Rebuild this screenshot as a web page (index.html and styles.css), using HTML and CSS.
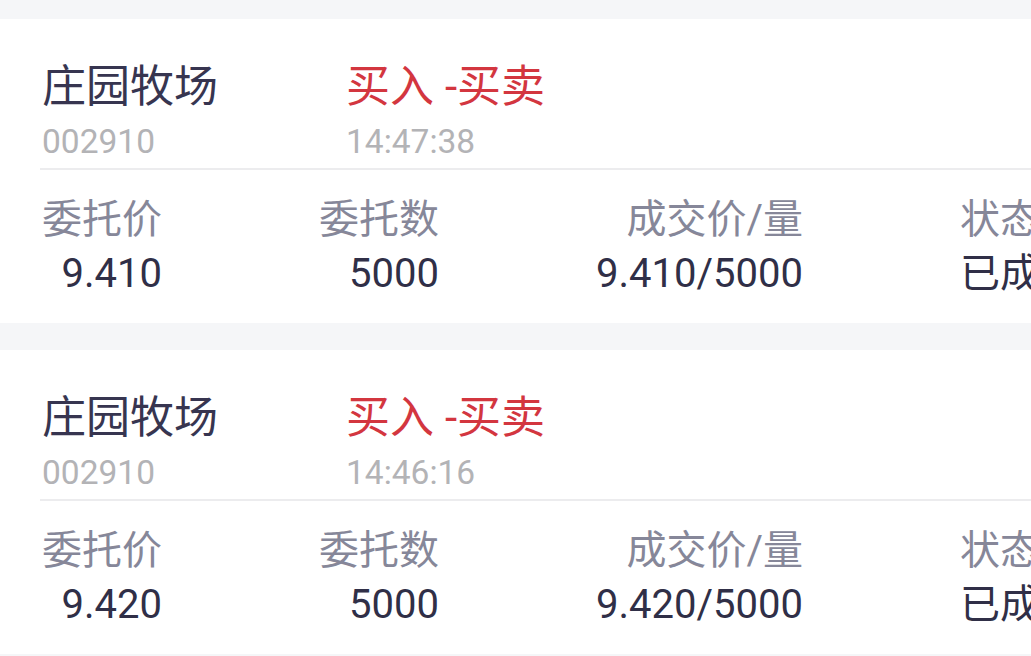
FILE: index.html
```html
<!DOCTYPE html>
<html lang="zh-CN">
<head>
  <meta charset="UTF-8">
  <meta name="viewport" content="width=device-width, initial-scale=1.0">
  <title>委托记录</title>
  <link rel="stylesheet" href="styles.css">
</head>
<body>
  <div class="list">
    <div class="order">
      <div class="order-head">
        <div class="stock">
          <div class="stock-name">庄园牧场</div>
          <div class="stock-code">002910</div>
        </div>
        <div class="trade">
          <div class="trade-type">买入 -买卖</div>
          <div class="trade-time">14:47:38</div>
        </div>
      </div>
      <div class="order-info">
        <div class="field">
          <div class="field-label">委托价</div>
          <div class="field-value">9.410</div>
        </div>
        <div class="field">
          <div class="field-label">委托数</div>
          <div class="field-value">5000</div>
        </div>
        <div class="field">
          <div class="field-label">成交价/量</div>
          <div class="field-value">9.410/5000</div>
        </div>
        <div class="field">
          <div class="field-label">状态</div>
          <div class="field-value">已成</div>
        </div>
      </div>
    </div>

    <div class="order">
      <div class="order-head">
        <div class="stock">
          <div class="stock-name">庄园牧场</div>
          <div class="stock-code">002910</div>
        </div>
        <div class="trade">
          <div class="trade-type">买入 -买卖</div>
          <div class="trade-time">14:46:16</div>
        </div>
      </div>
      <div class="order-info">
        <div class="field">
          <div class="field-label">委托价</div>
          <div class="field-value">9.420</div>
        </div>
        <div class="field">
          <div class="field-label">委托数</div>
          <div class="field-value">5000</div>
        </div>
        <div class="field">
          <div class="field-label">成交价/量</div>
          <div class="field-value">9.420/5000</div>
        </div>
        <div class="field">
          <div class="field-label">状态</div>
          <div class="field-value">已成</div>
        </div>
      </div>
    </div>
  </div>
</body>
</html>
```

FILE: styles.css
```css
body {
  margin: 0;
  padding: 0;
  background-color: #f5f6f8;
  font-family: Roboto, "Noto Sans CJK SC", sans-serif;
  overflow: hidden;
}
.list {
  padding-top: 19px;
}
.order {
  background-color: #fff;
  margin-bottom: 27px;
  padding: 39px 0 22px 40px;
  height: 243px;
  overflow: hidden;
}
.order-head {
  display: flex;
  padding-bottom: 2px;
  border-bottom: 2px solid #ececee;
}
.stock {
  width: 304px;
  padding-left: 2px;
  flex-shrink: 0;
}
.stock-name {
  font-size: 44px;
  line-height: 58px;
  color: #373550;
}
.stock-code,
.trade-time {
  margin-top: 2px;
  font-size: 33.5px;
  line-height: 48px;
  color: #b3b3b6;
}
.trade-type {
  font-size: 44px;
  line-height: 58px;
  color: #d3363f;
}
.order-info {
  display: flex;
  gap: 157px;
  margin-top: 23px;
  padding-left: 2px;
  white-space: nowrap;
}
.field {
  display: flex;
  flex-direction: column;
  align-items: flex-end;
  flex-shrink: 0;
}
.field-label {
  font-size: 40px;
  line-height: 54px;
  color: #868799;
}
.field-value {
  font-size: 40px;
  line-height: 54px;
  color: #302f47;
}
```
